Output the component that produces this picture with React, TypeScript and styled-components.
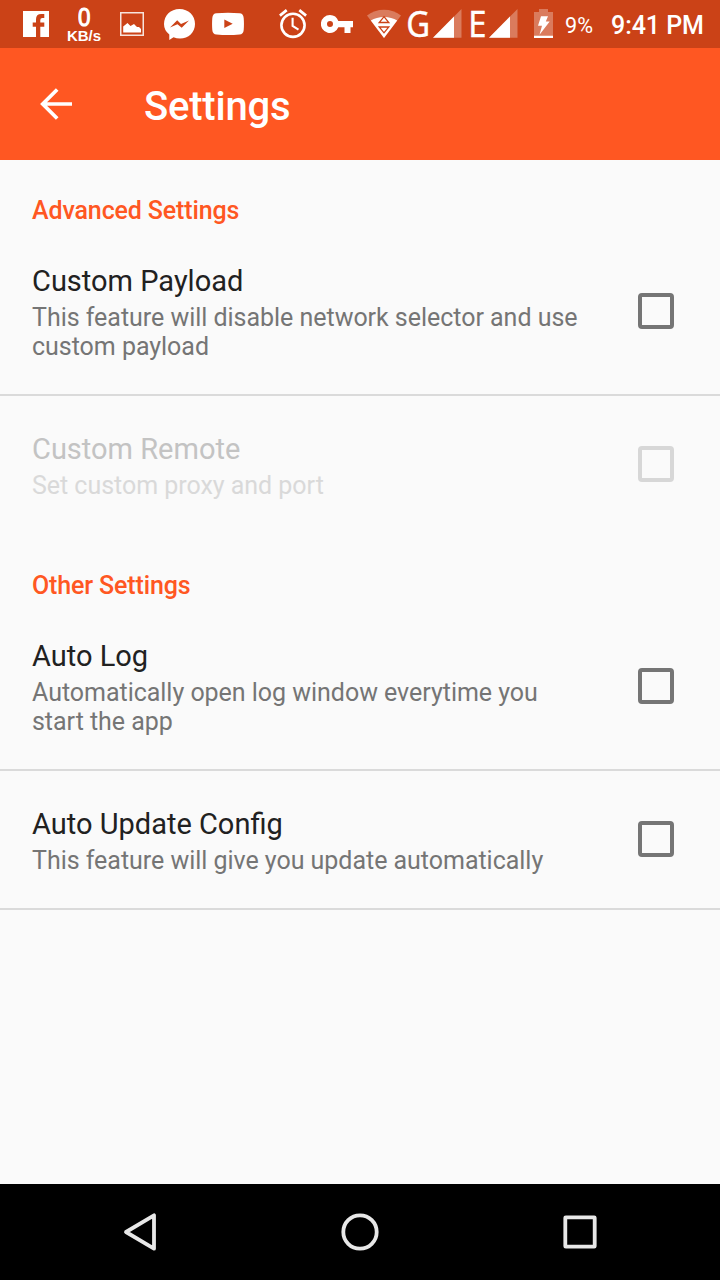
import React from "react";
import styled, { createGlobalStyle } from "styled-components";

const GlobalStyle = createGlobalStyle`
  *, *::before, *::after { box-sizing: border-box; }
  body { margin: 0; background: #fafafa; font-family: Roboto, sans-serif; }
`;

const Screen = styled.main`
  width: 720px;
  height: 1280px;
  display: flex;
  flex-direction: column;
  overflow: hidden;
  background: #fafafa;
`;

const StatusBar = styled.div`
  height: 48px;
  flex: none;
  display: flex;
  align-items: flex-start;
  padding-left: 23px;
  background: #cb4217;
  color: #fff;
`;

const Glyph = styled.svg<{ $gap?: number }>`
  display: block;
  flex: none;
  height: 48px;
  margin-left: ${(p) => p.$gap ?? 0}px;
`;

const Speed = styled.div`
  width: 36px;
  height: 48px;
  flex: none;
  margin-left: 17px;
  padding-top: 5px;
  display: flex;
  flex-direction: column;
  align-items: center;
  font-family: "Liberation Sans", sans-serif;
`;

const SpeedValue = styled.span`
  font-size: 26px;
  line-height: 25px;
  transform: scaleX(0.86);
  -webkit-text-stroke: 1.1px #fff;
`;

const SpeedUnit = styled.span`
  font-size: 15px;
  font-weight: 700;
  line-height: 12px;
`;

const NetworkType = styled.span<{ $gap: number; $width: number }>`
  width: ${(p) => p.$width}px;
  flex: none;
  margin-left: ${(p) => p.$gap}px;
  font-family: "Noto Sans", sans-serif;
  font-size: 36px;
  line-height: 48px;
  transform: scaleX(0.91);
  transform-origin: 3px 0;
  -webkit-text-stroke: 0.4px #fff;
`;

const BatteryLevel = styled.span`
  width: 30px;
  flex: none;
  margin-left: 12px;
  font-size: 21.6px;
  line-height: 51px;
  white-space: nowrap;
`;

const Clock = styled.span`
  margin-left: 16px;
  font-size: 25px;
  font-weight: 500;
  line-height: 52px;
  letter-spacing: -0.05px;
  white-space: nowrap;
`;

const AppBar = styled.header`
  height: 112px;
  flex: none;
  display: flex;
  align-items: center;
  padding-left: 32px;
  background: #ff5722;
  color: #fff;
`;

const BackButton = styled.button`
  width: 48px;
  height: 48px;
  padding: 0;
  border: 0;
  background: none;
  color: inherit;
`;

const Title = styled.h1`
  margin: 6px 0 0 64px;
  font-size: 40px;
  font-weight: 500;
  line-height: 48px;
  letter-spacing: -0.2px;
`;

const List = styled.div`
  flex: 1;
`;

const Category = styled.h2`
  height: 68px;
  margin: 0;
  padding: 36px 32px 0;
  color: #ff5722;
  font-size: 25px;
  font-weight: 500;
  line-height: 30px;
  letter-spacing: -0.13px;
`;

const Row = styled.label<{ $divider: boolean; $tall: boolean }>`
  height: ${(p) => (p.$tall ? 168 : 139)}px;
  display: flex;
  align-items: flex-start;
  justify-content: space-between;
  padding: 0 46px 0 32px;
  border-bottom: 2px solid ${(p) => (p.$divider ? "#dadada" : "transparent")};
`;

const RowText = styled.div`
  width: 560px;
  padding-top: 36px;
`;

const RowTitle = styled.div<{ $disabled: boolean }>`
  color: ${(p) => (p.$disabled ? "#c3c3c3" : "#212121")};
  font-size: 29px;
  line-height: 34px;
`;

const Summary = styled.div<{ $disabled: boolean }>`
  margin-top: 5px;
  color: ${(p) => (p.$disabled ? "#d9d9d9" : "#757575")};
  font-size: 25px;
  line-height: 29px;
  letter-spacing: -0.03px;
`;

const Checkbox = styled.input<{ $tall: boolean }>`
  appearance: none;
  width: 36px;
  height: 36px;
  flex: none;
  margin: ${(p) => (p.$tall ? 65 : 50)}px 0 0;
  border: 4px solid #757575;
  border-radius: 4px;

  &:disabled { border-color: #d7d7d7; }
`;

const NavBar = styled.nav`
  height: 96px;
  flex: none;
  display: flex;
  align-items: center;
  justify-content: center;
  gap: 172px;
  background: #000;
`;

const NavIcon = styled.svg`
  width: 48px;
  height: 48px;
  fill: none;
  stroke: #e8e8e8;
  stroke-width: 3.8;
  stroke-linejoin: round;
`;

type Setting = { title: string; lines: string[]; divider: boolean; disabled?: boolean };

const groups: { name: string; settings: Setting[] }[] = [
  {
    name: "Advanced Settings",
    settings: [
      {
        title: "Custom Payload",
        lines: ["This feature will disable network selector and use", "custom payload"],
        divider: true,
      },
      { title: "Custom Remote", lines: ["Set custom proxy and port"], divider: false, disabled: true },
    ],
  },
  {
    name: "Other Settings",
    settings: [
      {
        title: "Auto Log",
        lines: ["Automatically open log window everytime you", "start the app"],
        divider: true,
      },
      { title: "Auto Update Config", lines: ["This feature will give you update automatically"], divider: true },
    ],
  },
];

function Signal() {
  return (
    <Glyph width="29" viewBox="0 0 29 48">
      <path d="M28.500 9V37.700H0Z" fill="#fff" fillOpacity=".3" />
      <path d="M21 16.500V37.700H0Z" fill="#fff" />
    </Glyph>
  );
}

export default function App() {
  return (
    <Screen>
      <GlobalStyle />
      <StatusBar>
        <Glyph width="26" viewBox="0 0 26 48">
          <path fill="#fff" d="M0 11H26V37H17.300V26.700H21.300V22.500H17.300V20Q17.300 18 19.300 18H21.300V14H18.300Q13 14 13 19.300V22.500H9.700V26.700H13V37H0Z" />
        </Glyph>
        <Speed>
          <SpeedValue>0</SpeedValue>
          <SpeedUnit>KB/s</SpeedUnit>
        </Speed>
        <Glyph $gap={18} width="24" viewBox="0 0 24 48">
          <rect x=".75" y="12.750" width="22.500" height="22.500" fill="none" stroke="#fff" strokeWidth="1.500" strokeOpacity=".85" />
          <path fill="#fff" d="M3.200 32.500V26.500L7.500 23L10.500 26L14 24L17 27H19L21 29V32.500Z" />
        </Glyph>
        <Glyph $gap={20} width="31" viewBox="0 0 31 48">
          <path fill="#fff" d="M15.500 9C24.500 9 31 15.500 31 24S24.500 38.500 16 38.500Q12.500 38.500 9.500 37.300L5.300 40V34.400Q0 30.500 0 24C0 15.500 6.500 9 15.500 9Z" />
          <path fill="#cb4217" d="M6 27.500L13.200 20.300L17 24L25 20.500L17.700 27.800L13.500 24.200Z" />
        </Glyph>
        <Glyph $gap={17} width="32" viewBox="0 0 32 48">
          <path fill="#fff" d="M4.500 13.300Q16 12.300 27.500 13.300Q31.300 13.500 31.700 18Q32.200 24 31.700 30Q31.300 34.300 27.500 34.600Q16 35.600 4.500 34.600Q.7 34.300 .3 30Q-.2 24 .3 18Q.7 13.500 4.500 13.300Z" />
          <path fill="#cb4217" d="M12.300 19.500V28L20.700 23.700Z" />
        </Glyph>
        <Glyph $gap={35} width="28" viewBox="0 0 28 48">
          <g fill="none" stroke="#fff">
            <circle cx="14" cy="25.300" r="11.600" strokeWidth="2.600" />
            <path strokeWidth="2.700" d="M.9 15.600L7.700 10.100M27.100 15.600L20.300 10.100" />
            <path strokeWidth="2.100" d="M13.600 17.800V26L19.500 29.600" />
          </g>
        </Glyph>
        <Glyph $gap={14} width="32" viewBox="0 0 32 48">
          <path fill="#fff" fillRule="evenodd" d="M9 15A9 9 0 1 0 17.300 27.200H23.500V33H29.500V27.200H32V21H17.300A9 9 0 0 0 9 15ZM9 21A3 3 0 1 1 9 27A3 3 0 0 1 9 21Z" />
        </Glyph>
        <Glyph $gap={14} width="34" viewBox="0 0 34 48">
          <path fill="#fff" fillOpacity=".3" d="M0 15.500Q7.500 9.800 17 9.800T34 15.500L17 38Z" />
          <path fill="#fff" d="M3.800 20.600Q9.300 17 17 17T30.200 20.600L17 38Z" />
          <path fill="#fff" stroke="#cb4217" strokeWidth="1.300" d="M17 16.700L21.800 22.500H12.200ZM12.200 27H21.800L17 32.800Z" />
        </Glyph>
        <NetworkType $gap={5} $width={27}>G</NetworkType>
        <Signal />
        <NetworkType $gap={6} $width={21}>E</NetworkType>
        <Signal />
        <Glyph $gap={16} width="19" viewBox="0 0 19 48">
          <path fill="#fff" fillOpacity=".3" d="M5 9H14V12H19V38H0V12H5Z" />
          <path fill="#fff" d="M0 35.700H19V38H0ZM7 16.200H14L11.800 21.600H15.700L5.500 34.800L8 25.700H4Z" />
        </Glyph>
        <BatteryLevel>9%</BatteryLevel>
        <Clock>9:41 PM</Clock>
      </StatusBar>
      <AppBar>
        <BackButton aria-label="Back">
          <svg width="48" height="48" viewBox="0 0 48 48" fill="none" stroke="currentColor" strokeWidth="3.7">
            <path d="M40 24H11M25.200 9.500L10.700 24L25.200 38.500" />
          </svg>
        </BackButton>
        <Title>Settings</Title>
      </AppBar>
      <List>
        {groups.map((group) => (
          <section key={group.name}>
            <Category>{group.name}</Category>
            {group.settings.map((s) => {
              const tall = s.lines.length > 1;
              return (
                <Row key={s.title} $divider={s.divider} $tall={tall}>
                  <RowText>
                    <RowTitle $disabled={!!s.disabled}>{s.title}</RowTitle>
                    <Summary $disabled={!!s.disabled}>
                      {s.lines.map((line) => (
                        <div key={line}>{line}</div>
                      ))}
                    </Summary>
                  </RowText>
                  <Checkbox type="checkbox" disabled={s.disabled} $tall={tall} />
                </Row>
              );
            })}
          </section>
        ))}
      </List>
      <NavBar>
        <NavIcon viewBox="0 0 48 48">
          <path d="M38 7.300V40.700L10 24Z" />
        </NavIcon>
        <NavIcon viewBox="0 0 48 48">
          <circle cx="24" cy="24" r="16.700" />
        </NavIcon>
        <NavIcon viewBox="0 0 48 48">
          <rect x="9.300" y="9.300" width="29.400" height="29.400" rx=".5" />
        </NavIcon>
      </NavBar>
    </Screen>
  );
}
